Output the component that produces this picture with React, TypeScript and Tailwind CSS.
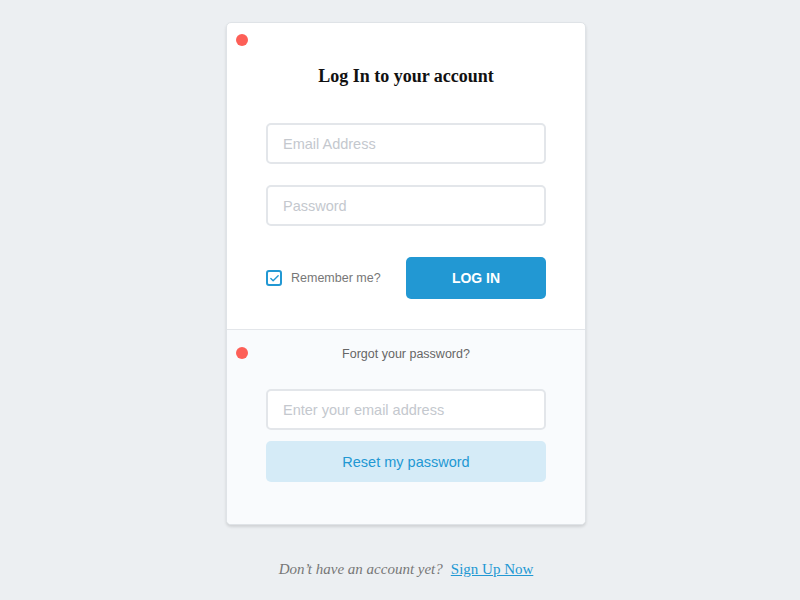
import { Check } from 'lucide-react'

export default function App() {
  return (
    <div className="min-h-screen bg-[#eceff2] flex flex-col items-center pt-[22px] pl-[12px] font-['Liberation_Sans',Arial,sans-serif]">
      <div className="relative w-[360px] bg-white rounded-[5px] border border-[#dfe3e7] shadow-[0_2px_3px_rgba(0,0,0,0.12)] overflow-hidden">
        <div className="relative px-[39px] pt-[40px] pb-[30px]">
          <span className="absolute left-[9px] top-[11px] w-[12px] h-[12px] rounded-full bg-[#fd5f57]" />
          <h1 className="text-center text-[18px] leading-[26px] font-bold text-[#111] font-['Liberation_Serif','Times_New_Roman',serif]">
            Log In to your account
          </h1>
          <div className="mt-[34px] flex flex-col gap-[21px]">
            <input
              type="text"
              placeholder="Email Address"
              className="h-[41px] w-full border-2 border-[#e3e6ea] rounded-[5px] px-[15px] pt-[1px] text-[14.5px] text-[#333] placeholder:text-[#c4c8ce] outline-none"
            />
            <input
              type="password"
              placeholder="Password"
              className="h-[41px] w-full border-2 border-[#e3e6ea] rounded-[5px] px-[15px] pt-[1px] text-[14.5px] text-[#333] placeholder:text-[#c4c8ce] outline-none"
            />
          </div>
          <div className="mt-[31px] flex items-center justify-between">
            <label className="flex items-center gap-[9px]">
              <span className="w-[16px] h-[16px] border-2 border-[#2298d3] rounded-[3px] flex items-center justify-center">
                <Check size={11} strokeWidth={3} className="text-[#2298d3]" />
              </span>
              <span className="text-[12.5px] text-[#777]">Remember me?</span>
            </label>
            <button className="w-[140px] h-[42px] rounded-[5px] bg-[#2298d3] text-white text-[14px] font-bold uppercase">
              Log In
            </button>
          </div>
        </div>
        <div className="relative border-t border-[#e3e6ea] bg-[#f9fbfd] px-[39px] pt-[15px] pb-[42px]">
          <span className="absolute left-[9px] top-[17px] w-[12px] h-[12px] rounded-full bg-[#fd5f57]" />
          <p className="text-center text-[12.5px] leading-[18px] text-[#666]">Forgot your password?</p>
          <input
            type="text"
            placeholder="Enter your email address"
            className="mt-[26px] h-[41px] w-full bg-white border-2 border-[#e3e6ea] rounded-[5px] px-[15px] pt-[1px] text-[14.5px] text-[#333] placeholder:text-[#c4c8ce] outline-none"
          />
          <button className="mt-[11px] w-full h-[41px] pt-[2px] rounded-[5px] bg-[#d5ebf7] text-[#2298d3] text-[14.5px]">
            Reset my password
          </button>
        </div>
      </div>
      <p className="mt-[33px] text-[15px] font-['Liberation_Serif','Times_New_Roman',serif]">
        <span className="italic text-[#777]">Don’t have an account yet?</span>
        <a href="#" className="ml-[8px] text-[#2298d3] underline">Sign Up Now</a>
      </p>
    </div>
  )
}
